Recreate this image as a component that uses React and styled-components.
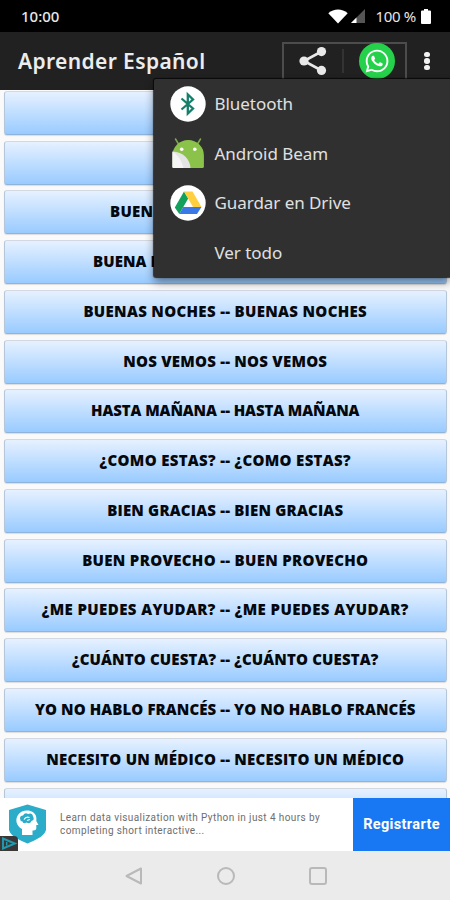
import React from 'react';
import styled, { createGlobalStyle } from 'styled-components';
import { FaWhatsapp } from 'react-icons/fa';

const phrases = [
  { text: '' },
  { text: '' },
  { text: 'BUEN', tracking: 0.3, start: 105 },
  { text: 'BUENA M', tracking: 0.1, start: 88 },
  { text: 'BUENAS NOCHES -- BUENAS NOCHES', tracking: 0.33 },
  { text: 'NOS VEMOS -- NOS VEMOS', tracking: 0.23 },
  { text: 'HASTA MAÑANA -- HASTA MAÑANA', tracking: -0.1 },
  { text: '¿COMO ESTAS? -- ¿COMO ESTAS?', tracking: 0.32 },
  { text: 'BIEN GRACIAS -- BIEN GRACIAS', tracking: 0.2 },
  { text: 'BUEN PROVECHO -- BUEN PROVECHO', tracking: 0.33 },
  { text: '¿ME PUEDES AYUDAR? -- ¿ME PUEDES AYUDAR?', tracking: 0.4 },
  { text: '¿CUÁNTO CUESTA? -- ¿CUÁNTO CUESTA?', tracking: 0.15 },
  { text: 'YO NO HABLO FRANCÉS -- YO NO HABLO FRANCÉS', tracking: 0.1 },
  { text: 'NECESITO UN MÉDICO -- NECESITO UN MÉDICO', tracking: 0.23 },
  { text: '' },
];

const WifiIcon = () => (
  <svg width="20" height="15" viewBox="0 0 20 15">
    <path d="M0.3 4.2C6 -0.8 14 -0.8 19.7 4.2L10 14.5Z" fill="#fff" />
  </svg>
);

const SignalIcon = () => (
  <svg width="14" height="14" viewBox="0 0 14 14">
    <path d="M14 0V14H0Z" fill="#555" />
    <path d="M5.5 8.5V14H0Z" fill="#fff" />
  </svg>
);

const BatteryIcon = () => (
  <svg width="10" height="15" viewBox="0 0 10 15">
    <path d="M3 0h4v1.6h2q1 0 1 1V14q0 1-1 1H1q-1 0-1-1V2.6q0-1 1-1h2z" fill="#fff" />
  </svg>
);

const ShareIcon = () => (
  <svg width="28" height="28" viewBox="0 0 28 28">
    <path d="M22.5 4.5L5 14L22.5 23.5" fill="none" stroke="#e8e8e8" strokeWidth="2.6" />
    <circle cx="22.5" cy="4.6" r="4.6" fill="#e8e8e8" />
    <circle cx="5" cy="14" r="4.6" fill="#e8e8e8" />
    <circle cx="22.5" cy="23.4" r="4.6" fill="#e8e8e8" />
  </svg>
);

const BluetoothIcon = () => (
  <svg width="36" height="36" viewBox="0 0 36 36">
    <circle cx="18" cy="18" r="17.7" fill="#fff" />
    <path
      d="M11.5 12.5L23 22.5L17.8 27.5V8.500L23 13.5L11.5 23.5"
      fill="none"
      stroke="#14806c"
      strokeWidth="2.3"
    />
  </svg>
);

const AndroidIcon = () => (
  <svg width="36" height="36" viewBox="0 0 36 36">
    <path d="M8.5 9L5.2 3.5M27.5 9L30.8 3.5" stroke="#7da94c" strokeWidth="1.5" />
    <path d="M2.5 33V20.5a15.7 15.5 0 0 1 31.4 0V31.5q0 1.5-1.5 1.5z" fill="#8bc34a" />
    <path d="M2.5 16.5C13 17 20 24 20.5 33H4q-1.5 0-1.5-1.5z" fill="#e4e4e4" />
    <path d="M2.5 16.5C9 21 12 27 13.5 33H4q-1.5 0-1.5-1.5z" fill="#f5f5f5" />
    <circle cx="11.7" cy="14.2" r="1.8" fill="#fff" />
    <circle cx="24.8" cy="14.2" r="1.8" fill="#fff" />
  </svg>
);

const DriveIcon = () => (
  <svg width="36" height="36" viewBox="0 0 36 36">
    <circle cx="18" cy="18" r="17.7" fill="#fff" />
    <path d="M14 6.5L4.8 22.5L9.3 29L18.2 13.5Z" fill="#12a15c" />
    <path d="M14 6.5H22.5L31.5 22H23Z" fill="#ffcf3f" />
    <path d="M13.3 22H31.5L27 29H9.3Z" fill="#3b78e7" />
  </svg>
);

const BrainShield = () => (
  <svg width="39" height="40" viewBox="0 0 39 40">
    <path d="M19.5 0.5L38 6V26C36 33 27 36 19.5 39.5C12 36 3 33 1 26V6Z" fill="#2bacc8" />
    <path
      d="M14 31V25C8 22 7 15 10 11C14 5 25 5 28 12C28.5 14 28.5 15.5 28.3 17L30.5 21H28.3V24.5Q28 27 24.5 26.5V31Z"
      fill="#fff"
    />
    <path
      d="M12 14.5Q12 11.5 15 11.5Q17 8 20 10Q24.5 8.5 25 12.5Q27 16 23.5 17Q22 20.5 18.5 18.5Q15 20.5 14.5 17.5Q12 17 12 14.5Z"
      fill="#2bacc8"
    />
    <path d="M16 15.5Q18 12 21.5 13.5M19 16.5L22 15.5" fill="none" stroke="#fff" strokeWidth="1.2" />
  </svg>
);

const AdChoices = () => (
  <svg width="18" height="15" viewBox="0 0 18 15">
    <path d="M0 0H14Q18 0 18 4V15H0Z" fill="#3c3838" />
    <path d="M3 2.5L15 7.500L3 12.500Z" fill="none" stroke="#229bb0" strokeWidth="1.9" />
    <path d="M6.700 6V9.500" stroke="#229bb0" strokeWidth="1.4" />
  </svg>
);

const menuItems = [
  { label: 'Bluetooth', icon: <BluetoothIcon /> },
  { label: 'Android Beam', icon: <AndroidIcon /> },
  { label: 'Guardar en Drive', icon: <DriveIcon /> },
  { label: 'Ver todo', icon: null },
];

const App = () => (
  <>
    <GlobalStyle />
    <Screen>
      <StatusBar>
        <Clock>10:00</Clock>
        <StatusIcons>
          <WifiIcon />
          <SignalIcon />
          <BatteryLevel>100 %</BatteryLevel>
          <BatteryIcon />
        </StatusIcons>
      </StatusBar>
      <AppBar>
        <Title>Aprender Español</Title>
        <ShareBox>
          <ShareIcon />
          <Divider />
          <WhatsAppButton>
            <FaWhatsapp size={26} />
          </WhatsAppButton>
        </ShareBox>
        <Overflow>
          <Dot />
          <Dot />
          <Dot />
        </Overflow>
        <ShareMenu>
          {menuItems.map(({ label, icon }) => (
            <MenuItem key={label}>
              <MenuIcon>{icon}</MenuIcon>
              {label}
            </MenuItem>
          ))}
        </ShareMenu>
      </AppBar>
      <PhraseList>
        {phrases.map(({ text, tracking, start }, index) => (
          // eslint-disable-next-line react/no-array-index-key
          <Phrase key={index} $tracking={tracking} $start={start}>{text}</Phrase>
        ))}
      </PhraseList>
      <AdBanner>
        <AdLogo>
          <BrainShield />
          <AdBadge><AdChoices /></AdBadge>
        </AdLogo>
        <AdText>
          Learn data visualization with Python in just 4 hours by
          <br />
          completing short interactive...
        </AdText>
        <AdButton>Registrarte</AdButton>
      </AdBanner>
      <NavBar>
        <svg width="18" height="18" viewBox="0 0 18 18">
          <path d="M16 1.5V16.5L1.5 9Z" fill="none" stroke="#b9b9b9" strokeWidth="2" strokeLinejoin="round" />
        </svg>
        <HomeKey />
        <RecentsKey />
      </NavBar>
    </Screen>
  </>
);

export default App;

const GlobalStyle = createGlobalStyle`
  body {
    margin: 0;
  }
  svg {
    display: block;
    flex-shrink: 0;
  }
`;

const Screen = styled.div`
  width: 450px;
  height: 900px;
  display: flex;
  flex-direction: column;
  overflow: hidden;
  background: #fafafa;
  font-family: "Noto Sans", sans-serif;
`;

const StatusBar = styled.div`
  height: 32px;
  flex-shrink: 0;
  box-sizing: border-box;
  padding: 0 19px 0 21px;
  display: flex;
  align-items: center;
  justify-content: space-between;
  background: #000;
  color: #e6e6e6;
  font-size: 15px;
`;

const Clock = styled.span`
  font-weight: 500;
`;

const StatusIcons = styled.div`
  display: flex;
  align-items: center;
  gap: 3px;
`;

const BatteryLevel = styled.span`
  margin: 0 2px 0 7px;
  letter-spacing: -0.3px;
`;

const AppBar = styled.header`
  position: relative;
  z-index: 1;
  height: 58px;
  flex-shrink: 0;
  box-sizing: border-box;
  padding: 0 20px 0 18px;
  display: flex;
  align-items: center;
  background: #212121;
`;

const Title = styled.h1`
  margin: 0;
  flex: 1;
  color: #ececec;
  font-size: 21px;
  font-weight: 600;
  letter-spacing: 0.38px;
`;

const ShareBox = styled.div`
  width: 125px;
  height: 39px;
  box-sizing: border-box;
  padding: 0 10px 0 15px;
  display: flex;
  align-items: center;
  justify-content: space-between;
  border: 2px solid #4c4c4c;
`;

const Divider = styled.div`
  width: 2px;
  height: 24px;
  background: #333;
`;

const WhatsAppButton = styled.div`
  width: 36px;
  height: 36px;
  display: flex;
  align-items: center;
  justify-content: center;
  border-radius: 50%;
  background: #25d04b;
  color: #fff;
`;

const Overflow = styled.div`
  width: 6px;
  margin-left: 17px;
  display: flex;
  flex-direction: column;
  gap: 1px;
`;

const Dot = styled.span`
  width: 5.5px;
  height: 5.5px;
  border-radius: 50%;
  background: #f2f2f2;
`;

const ShareMenu = styled.div`
  position: absolute;
  top: 47px;
  right: 0;
  width: 296px;
  height: 198px;
  box-sizing: border-box;
  display: flex;
  flex-direction: column;
  border-radius: 2px 0 0 2px;
  background: #303030;
  box-shadow: 0 5px 10px rgba(0, 0, 0, 0.45), 0 0 1px 1px rgba(0, 0, 0, 0.7);
`;

const MenuItem = styled.div`
  height: 50px;
  display: flex;
  align-items: center;
  gap: 8.5px;
  padding-left: 16px;
  color: #e0e0e0;
  font-size: 17px;
  letter-spacing: -0.05px;
`;

const MenuIcon = styled.span`
  width: 36px;
  height: 36px;
`;

const PhraseList = styled.main`
  flex: 1;
  min-height: 0;
  overflow: hidden;
  padding: 0.8px 3.5px 0 4px;
  display: flex;
  flex-direction: column;
  gap: 5.77px;
`;

const Phrase = styled.div`
  height: 44px;
  flex-shrink: 0;
  box-sizing: border-box;
  padding-bottom: 2px;
  padding-left: ${({ $start = 0 }) => $start}px;
  display: flex;
  align-items: center;
  justify-content: ${({ $start }) => ($start ? 'flex-start' : 'center')};
  border: 1px solid #b5c6da;
  border-top-color: #d3d9e2;
  border-bottom-color: #8fb3d9;
  border-radius: 3px;
  background: linear-gradient(#e6f1ff, #99cbff);
  box-shadow: 0 1px 1px rgba(0, 0, 0, 0.12);
  color: #05080c;
  font-family: "Open Sans", sans-serif;
  font-size: 15px;
  font-weight: 800;
  letter-spacing: ${({ $tracking = 0 }) => $tracking}px;
  white-space: pre;
`;

const AdBanner = styled.aside`
  height: 53px;
  flex-shrink: 0;
  display: flex;
  background: #fff;
  font-family: Roboto, sans-serif;
`;

const AdLogo = styled.div`
  position: relative;
  width: 60px;
  box-sizing: border-box;
  padding: 6px 0 0 8px;
`;

const AdBadge = styled.span`
  position: absolute;
  left: 0;
  bottom: 0;
`;

const AdText = styled.p`
  margin: 0;
  padding-top: 14px;
  flex: 1;
  color: #6e6e6e;
  font-size: 10px;
  line-height: 12.5px;
  letter-spacing: 0.4px;
  white-space: nowrap;
`;

const AdButton = styled.button`
  width: 97px;
  padding: 0;
  border: 0;
  background: #1877f2;
  color: #fff;
  font: 700 14.5px Roboto, sans-serif;
  letter-spacing: 0.35px;
`;

const NavBar = styled.nav`
  height: 49px;
  flex-shrink: 0;
  box-sizing: border-box;
  padding: 0 123px 0 125px;
  display: flex;
  align-items: center;
  justify-content: space-between;
  background: #ebebeb;
`;

const HomeKey = styled.span`
  width: 18px;
  height: 18px;
  box-sizing: border-box;
  border: 2px solid #b9b9b9;
  border-radius: 50%;
`;

const RecentsKey = styled(HomeKey)`
  border-radius: 3px;
`;
